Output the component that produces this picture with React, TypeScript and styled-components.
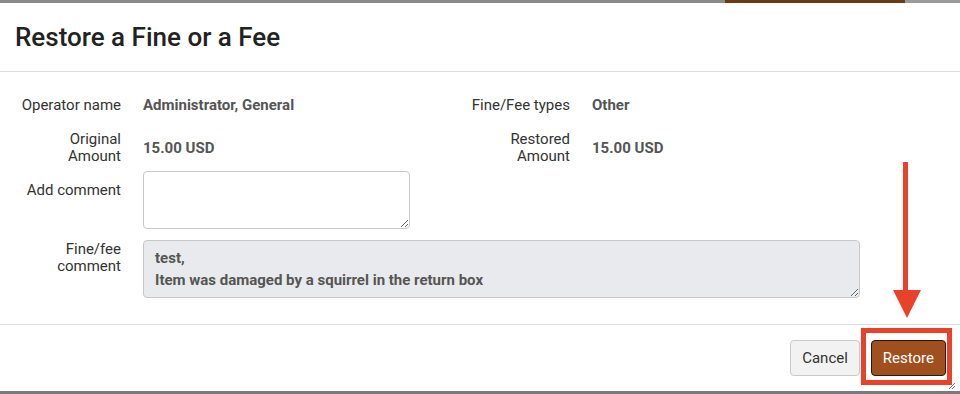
import React from "react";
import styled, { createGlobalStyle } from "styled-components";

const Global = createGlobalStyle`
  html, body { margin: 0; padding: 0; }
  body {
    background: #7d7d7d;
    font-family: Roboto, "Liberation Sans", Arial, sans-serif;
    width: 960px;
    height: 394px;
    overflow: hidden;
  }
`;

const Page = styled.div`
  position: relative;
  width: 960px;
  height: 394px;
  display: flex;
  flex-direction: column;
`;

const BackStrip = styled.div<{ $h: number }>`
  height: ${(p) => p.$h}px;
  background: #858585;
  display: flex;
  align-items: stretch;
  overflow: hidden;
`;

const StripSeg = styled.div<{ $w: number; $c: string }>`
  width: ${(p) => p.$w}px;
  background: ${(p) => p.$c};
  flex-shrink: 0;
`;

const Dialog = styled.div`
  position: relative;
  background: #fff;
  height: 388px;
  display: flex;
  flex-direction: column;
`;

const Header = styled.div`
  border-bottom: 1px solid #dedede;
  display: flex;
  align-items: center;
  padding: 0 15px;
  box-sizing: border-box;
  height: 69px;
`;

const Title = styled.h1`
  margin: 0;
  font-size: 26px;
  font-weight: 500;
  color: #222;
  letter-spacing: 0;
`;

const Body = styled.div`
  padding: 25px 0 26px 0;
  border-bottom: 1px solid #dedede;
`;

const Row = styled.div<{ $mt: number }>`
  display: grid;
  grid-template-columns: 121px 267px 138px 268px;
  column-gap: 22px;
  margin-top: ${(p) => p.$mt}px;
  align-items: center;
`;

const Label = styled.div<{ $pt?: number }>`
  text-align: right;
  font-size: 15px;
  line-height: 17px;
  color: #333;
  align-self: ${(p) => (p.$pt !== undefined ? "start" : "center")};
  padding-top: ${(p) => p.$pt ?? 0}px;
`;

const Value = styled.div`
  font-size: 15px;
  line-height: 17px;
  font-weight: 700;
  color: #555;
`;

const TextArea = styled.textarea<{ $span?: boolean }>`
  box-sizing: border-box;
  height: 58px;
  width: 100%;
  border: 1px solid #c8c8c8;
  border-radius: 4px;
  padding: 6px 11px;
  font-family: Roboto, "Liberation Sans", Arial, sans-serif;
  font-size: 15px;
  line-height: 22px;
  font-weight: 700;
  color: #555;
  background: ${(p) => (p.$span ? "#e9eaed" : "#fff")};
  grid-column: ${(p) => (p.$span ? "2 / 5" : "2 / 3")};
  margin: 0;
  display: block;
  outline: none;
`;

const Footer = styled.div`
  flex: 1;
  display: flex;
  justify-content: flex-end;
  align-items: center;
  gap: 11px;
  padding-right: 14px;
`;

const Button = styled.button<{ $primary?: boolean }>`
  height: 36px;
  border-radius: 4px;
  padding: 0 11px;
  font-family: Roboto, "Liberation Sans", Arial, sans-serif;
  font-size: 15px;
  border: 1px solid ${(p) => (p.$primary ? "#2a1a10" : "#c9c9c9")};
  background: ${(p) => (p.$primary ? "#a0501f" : "#f2f2f2")};
  color: ${(p) => (p.$primary ? "#fff" : "#333")};
  cursor: pointer;
`;

const ArrowLine = styled.div`
  position: absolute;
  left: 903px;
  top: 162px;
  width: 5px;
  height: 132px;
  background: #e8432a;
`;

const ArrowHead = styled.svg`
  position: absolute;
  left: 893px;
  top: 290px;
`;

const Highlight = styled.div`
  position: absolute;
  left: 861px;
  top: 328px;
  width: 91px;
  height: 57px;
  box-sizing: border-box;
  border: 5px solid #e8432a;
`;

const Grip = styled.svg`
  position: absolute;
  right: 4px;
  bottom: 1px;
`;

export default function App() {
  return (
    <>
      <Global />
      <Page>
        <BackStrip $h={3}>
          <StripSeg $w={725} $c="#8a8a8a" />
          <StripSeg $w={180} $c="#6b3818" />
          <StripSeg $w={55} $c="#9a9a9a" />
        </BackStrip>
        <Dialog>
          <Header>
            <Title>Restore a Fine or a Fee</Title>
          </Header>
          <Body>
            <Row $mt={0}>
              <Label>Operator name</Label>
              <Value>Administrator, General</Value>
              <Label>Fine/Fee types</Label>
              <Value>Other</Value>
            </Row>
            <Row $mt={17}>
              <Label>
                Original
                <br />
                Amount
              </Label>
              <Value>15.00 USD</Value>
              <Label>
                Restored
                <br />
                Amount
              </Label>
              <Value>15.00 USD</Value>
            </Row>
            <Row $mt={6}>
              <Label $pt={11}>Add comment</Label>
              <TextArea />
            </Row>
            <Row $mt={11}>
              <Label $pt={1}>
                Fine/fee
                <br />
                comment
              </Label>
              <TextArea
                $span
                readOnly
                defaultValue={"test,\nItem was damaged by a squirrel in the return box"}
              />
            </Row>
          </Body>
          <Footer>
            <Button>Cancel</Button>
            <Button $primary>Restore</Button>
          </Footer>
          <Grip width="8" height="8" viewBox="0 0 8 8">
            <path d="M7 1 L1 7 M7 4 L4 7" stroke="#777" strokeWidth="1" />
          </Grip>
        </Dialog>
        <BackStrip $h={3}>
          <StripSeg $w={960} $c="#7a7a7a" />
        </BackStrip>
        <ArrowLine />
        <ArrowHead width="28" height="28" viewBox="0 0 28 28">
          <polygon points="0,0 28,0 14,28" fill="#e8432a" />
        </ArrowHead>
        <Highlight />
      </Page>
    </>
  );
}
